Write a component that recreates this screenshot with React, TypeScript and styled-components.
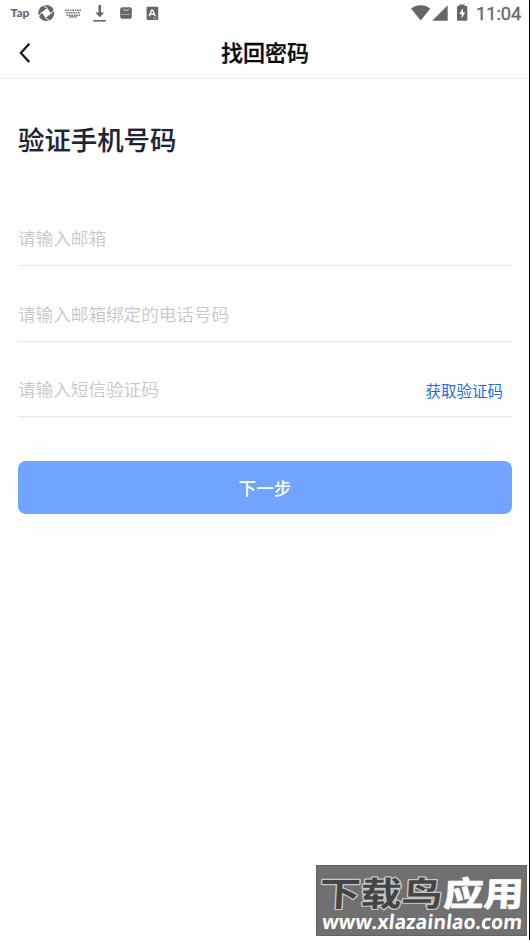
import React, { useState } from 'react';
import styled, { createGlobalStyle } from 'styled-components';

const GlobalStyle = createGlobalStyle`
	* {
		box-sizing: border-box;
	}
	body {
		margin: 0;
		background-color: #fefefe;
		font-family: 'Noto Sans CJK SC', 'Noto Sans', sans-serif;
	}
`;

const StyledPage = styled.div`
	position: relative;
	display: flex;
	flex-direction: column;
	height: 940px;
	overflow: hidden;
	border-right: 1px solid #000;
	background-color: #fefefe;
`;

const StyledStatusBar = styled.div`
	display: flex;
	justify-content: space-between;
	height: 27px;
	color: #666;
	svg {
		display: block;
	}
`;

const StyledClock = styled.span`
	width: 53px;
	font-family: Roboto, sans-serif;
	font-size: 18.2px;
	font-weight: 400;
	line-height: 28px;
	white-space: nowrap;
	-webkit-text-stroke: 0.3px #666;
`;

const StyledStatusRight = styled.div`
	display: flex;
`;

const StyledHeader = styled.header`
	display: grid;
	grid-template-columns: 50px 1fr 50px;
	align-items: center;
	height: 52px;
	border-bottom: 1px solid #efefef;
`;

const StyledBackButton = styled.button`
	display: flex;
	height: 51px;
	padding: 0;
	border: 0;
	background-color: transparent;
`;

const StyledHeaderTitle = styled.h1`
	margin: 0;
	padding: 0 0 4px 1px;
	font-size: 22px;
	font-weight: 500;
	line-height: 32px;
	text-align: center;
	color: #0a0a0a;
	-webkit-text-stroke: 0.3px #0a0a0a;
`;

const StyledContent = styled.main`
	display: flex;
	flex-direction: column;
	padding: 40px 17px 0 18px;
`;

const StyledTitle = styled.h2`
	margin: 0 0 51px;
	font-size: 26.4px;
	font-weight: 500;
	line-height: 40px;
	color: #1d2433;
	-webkit-text-stroke: 0.15px #1d2433;
`;

const StyledField = styled.div<{ $height: number }>`
	display: flex;
	align-items: flex-end;
	height: ${({ $height }) => $height}px;
	padding-bottom: 14px;
	border-bottom: 1px solid #e8e8e8;
`;

const StyledInput = styled.input`
	flex: 1;
	min-width: 0;
	height: 28px;
	padding: 0;
	border: 0;
	outline: 0;
	background-color: transparent;
	font-family: inherit;
	font-size: 17.6px;
	font-weight: 350;
	color: #1d2433;
	&::placeholder {
		color: #c8c8c8;
		opacity: 1;
	}
`;

const StyledCodeButton = styled.button`
	height: 26px;
	padding: 1px 0 0;
	margin-right: 9px;
	border: 0;
	background-color: transparent;
	font-family: inherit;
	font-size: 15.5px;
	line-height: 26px;
	color: #1f6fe5;
`;

const StyledSubmit = styled.button`
	height: 53px;
	margin-top: 44px;
	padding: 0 0 1px;
	border: 0;
	border-radius: 8px;
	background-color: #70a4ff;
	font-family: inherit;
	font-size: 17.6px;
	font-weight: 500;
	color: #fff;
`;

const StyledWatermark = styled.div`
	position: absolute;
	right: 2px;
	bottom: 4px;
	width: 211px;
	height: 71px;
	border: 1px solid #626262;
	background-color: #707070;
	svg {
		display: block;
		overflow: visible;
	}
`;

const StatusIcons = () => (
	<svg width="170" height="27" viewBox="0 0 170 27" fill="#666">
		<text
			x="10.5"
			y="17"
			fontFamily="Lato, sans-serif"
			fontSize="12"
			fontWeight="900"
			textLength="19"
			lengthAdjust="spacingAndGlyphs"
		>
			Tap
		</text>
		<circle cx="46.3" cy="13" r="8" />
		<path
			d="M47.3 8.2 51.2 13.6 45.6 17.9 41.5 12.3Z"
			fill="#fefefe"
		/>
		<path
			d="M47.3 8.2 42.8 5.3M51.2 13.6 54.2 9.8M45.6 17.9 49.7 20.8M41.5 12.3 38.6 16.4"
			stroke="#fefefe"
			strokeWidth="1"
		/>
		{/* 키보드 */}
		<path
			d="M65 10.2H81M66 12.7H80.5M66.5 15.2H80"
			stroke="#777"
			strokeWidth="1.4"
			strokeDasharray="1.7 0.7"
		/>
		<path d="M69 16.9H77" stroke="#777" strokeWidth="1.2" />
		<path d="M98.5 5H101V12.4H104.2L99.75 17.3 95.3 12.4H98.5Z" />
		<rect x="93.3" y="20" width="12.5" height="1.6" />
		<rect x="120.2" y="7.2" width="11.6" height="11.6" rx="2" />
		<path
			d="M123.3 8.8C124 11 128 11 128.7 8.8"
			fill="none"
			stroke="#eee"
			strokeWidth="0.9"
		/>
		<path
			d="M121.5 14.5H130.5"
			stroke="#bbb"
			strokeWidth="1.2"
			strokeDasharray="1.7 0.5"
		/>
		<rect x="146.6" y="6.7" width="11.6" height="13.2" rx="1" />
		<path
			d="M149.2 16.3 151.6 10.2H152.8L155.2 16.3M150.4 14.2H154"
			fill="none"
			stroke="#fefefe"
			strokeWidth="1.4"
		/>
		<path d="M153 18.2H157" stroke="#bbb" strokeWidth="0.8" />
	</svg>
);

const SignalIcons = () => (
	<svg width="66" height="27" viewBox="410 0 66 27" fill="#666">
		<path d="M411 8.6C416.5 4 425 4 430.3 8.6L420.7 20.5Z" />
		<path d="M447.7 5.3V20.7H432.3Z" />
		<path d="M459.3 4.5H464.7V6H466.4Q467.3 6 467.3 7V19.7Q467.3 20.7 466.3 20.7H458Q457 20.7 457 19.7V7Q457 6 458 6H459.3Z" />
		<path d="M463 8.3 459.3 14.1H461.6V18.4L465.2 12.5H463Z" fill="#fefefe" />
	</svg>
);

const Watermark = () => (
	<StyledWatermark>
		<svg width="209" height="69" viewBox="0 0 209 69">
			<g
				fontFamily="'Noto Sans CJK SC', sans-serif"
				fontSize="37"
				fontWeight="700"
				strokeLinejoin="round"
				paintOrder="stroke"
				transform="translate(2 40) skewX(-3) scale(1 .91)"
			>
				<text
					x="0"
					y="0"
					fill="#444"
					stroke="#c9c9c9"
					strokeWidth="2.6"
					textLength="123"
					lengthAdjust="spacingAndGlyphs"
				>
					下载鸟
				</text>
				<text
					x="124"
					y="0"
					fill="#fff"
					stroke="#fff"
					strokeWidth="1"
					textLength="80"
					lengthAdjust="spacingAndGlyphs"
				>
					应用
				</text>
			</g>
			<text
				x="0"
				y="0"
				transform="translate(4.5 62.5) skewX(-6)"
				fill="#fff"
				fontFamily="'Open Sans', 'Noto Sans', sans-serif"
				fontSize="20"
				fontWeight="700"
				textLength="200"
				lengthAdjust="spacingAndGlyphs"
			>
				www.xlazainlao.com
			</text>
		</svg>
	</StyledWatermark>
);

const App: React.FC = () => {
	const [email, setEmail] = useState('');
	const [phone, setPhone] = useState('');
	const [code, setCode] = useState('');

	return (
		<StyledPage>
			<GlobalStyle />
			<StyledStatusBar>
				<StatusIcons />
				<StyledStatusRight>
					<SignalIcons />
					<StyledClock>11:04</StyledClock>
				</StyledStatusRight>
			</StyledStatusBar>
			<StyledHeader>
				<StyledBackButton aria-label="返回">
					<svg width="50" height="51" viewBox="0 27 50 51" fill="none">
						<path
							d="M29.3 43.7 20.8 52.9 29.3 62.1"
							stroke="#111"
							strokeWidth="2.2"
						/>
					</svg>
				</StyledBackButton>
				<StyledHeaderTitle>找回密码</StyledHeaderTitle>
			</StyledHeader>
			<StyledContent>
				<StyledTitle>验证手机号码</StyledTitle>
				<StyledField $height={56}>
					<StyledInput
						value={email}
						onChange={(e) => setEmail(e.target.value)}
						placeholder="请输入邮箱"
					/>
				</StyledField>
				<StyledField $height={76}>
					<StyledInput
						value={phone}
						onChange={(e) => setPhone(e.target.value)}
						placeholder="请输入邮箱绑定的电话号码"
					/>
				</StyledField>
				<StyledField $height={75}>
					<StyledInput
						value={code}
						onChange={(e) => setCode(e.target.value)}
						placeholder="请输入短信验证码"
					/>
					<StyledCodeButton>获取验证码</StyledCodeButton>
				</StyledField>
				<StyledSubmit>下一步</StyledSubmit>
			</StyledContent>
			<Watermark />
		</StyledPage>
	);
};

export default App;
